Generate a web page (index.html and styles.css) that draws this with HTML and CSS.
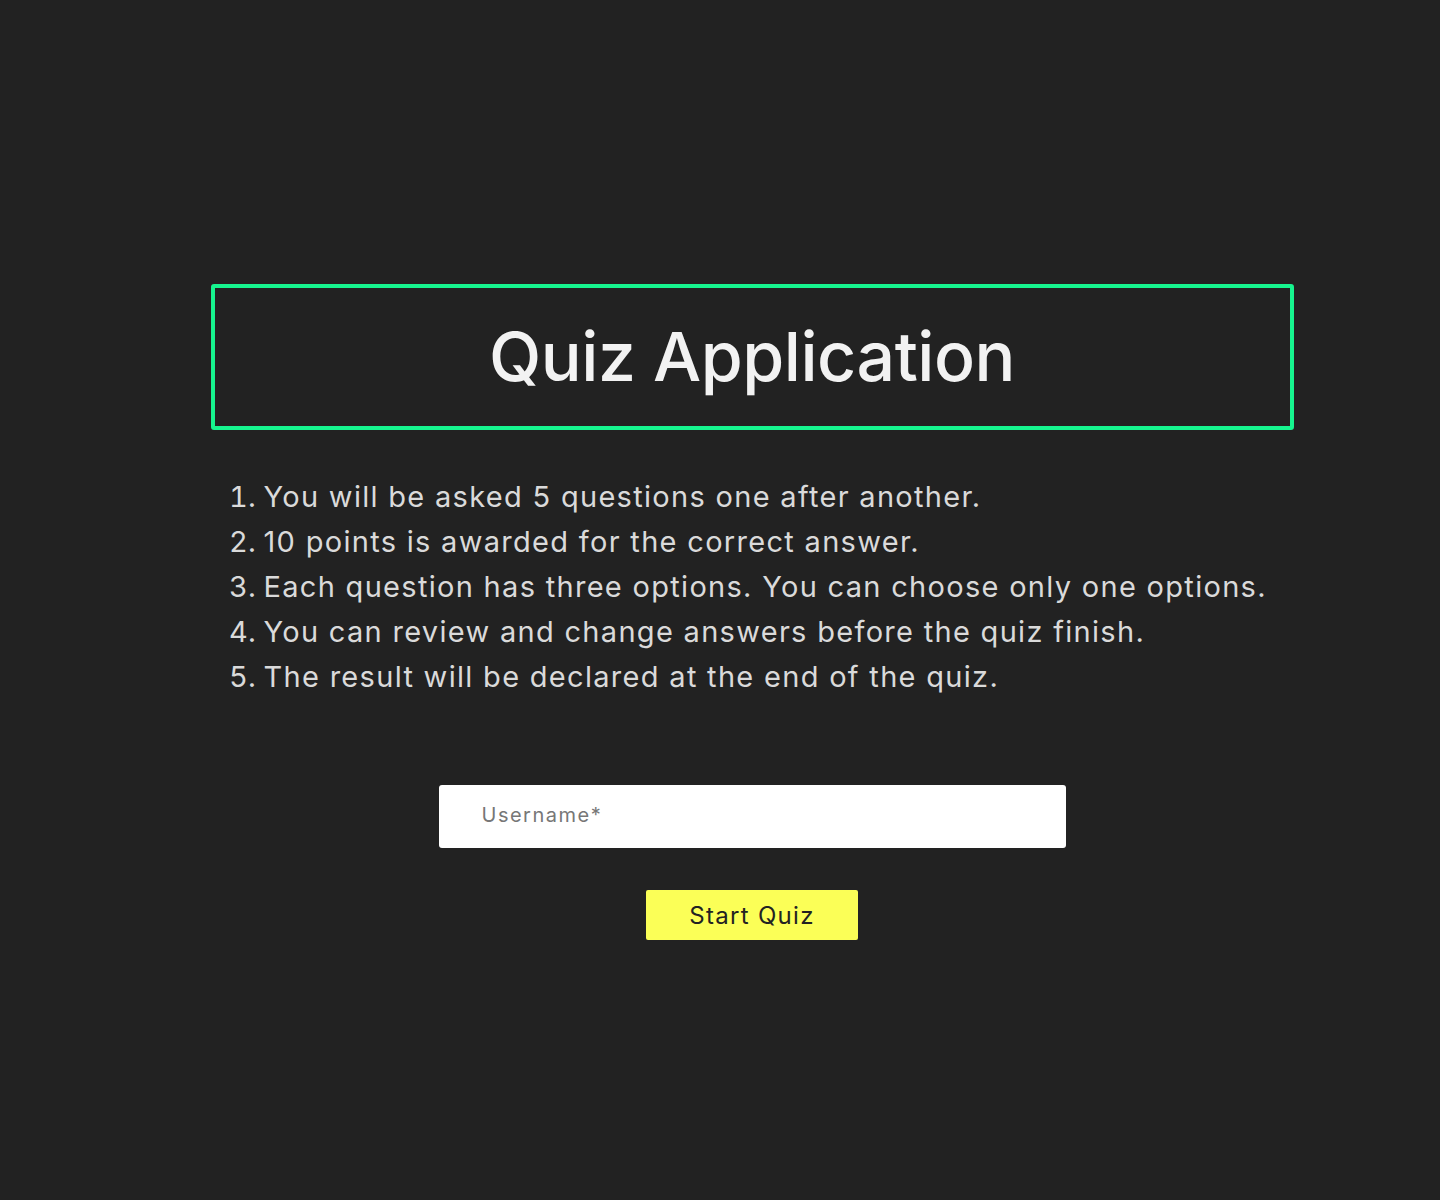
FILE: index.html
```html
<!DOCTYPE html>
<html lang="en">
<head>
<meta charset="utf-8">
<title>Quiz Application</title>
<link rel="stylesheet" href="styles.css">
</head>
<body>
<main class="page">
  <section class="quiz">
    <header class="quiz-header">
      <h1 class="quiz-title">Quiz Application</h1>
    </header>
    <ol class="rules">
      <li>You will be asked 5 questions one after another.</li>
      <li>10 points is awarded for the correct answer.</li>
      <li>Each question has three options. You can choose only one options.</li>
      <li>You can review and change answers before the quiz finish.</li>
      <li>The result will be declared at the end of the quiz.</li>
    </ol>
    <form class="start-form">
      <input class="username" type="text" placeholder="Username*">
      <button class="start-btn" type="button">Start Quiz</button>
    </form>
  </section>
</main>
</body>
</html>
```

FILE: styles.css
```css
html, body {
  margin: 0;
  padding: 0;
  background: #222222;
}
body {
  font-family: Inter, "Noto Sans", "Liberation Sans", sans-serif;
  min-height: 1200px;
}
.page {
  padding: 284px 0 0 64px;
  display: flex;
  justify-content: center;
}
.quiz {
  width: 1083px;
  display: flex;
  flex-direction: column;
}
.quiz-header {
  box-sizing: border-box;
  height: 146px;
  border: 4px solid #16f58f;
  border-radius: 3px;
  display: flex;
  align-items: center;
  justify-content: center;
}
.quiz-title {
  margin: 0;
  color: #f2f2f2;
  font-size: 68px;
  font-weight: 500;
  letter-spacing: -0.5px;
  line-height: 1;
  padding-bottom: 2px;
}
.rules {
  margin: 44px 0 0;
  padding-left: 53px;
  color: #dadada;
  font-size: 29px;
  line-height: 45px;
  letter-spacing: 1.3px;
}
.rules li::marker {
  letter-spacing: 0;
}
.start-form {
  margin-top: 86px;
  display: flex;
  flex-direction: column;
  align-items: center;
  gap: 42px;
}
.username {
  box-sizing: border-box;
  width: 627px;
  height: 63px;
  border: none;
  border-radius: 3px;
  background: #ffffff;
  padding: 0 0 4px 43px;
  font-family: inherit;
  font-size: 20px;
  letter-spacing: 1.5px;
  color: #333;
  outline: none;
}
.username::placeholder {
  color: #777777;
}
.start-btn {
  box-sizing: border-box;
  width: 212px;
  height: 50px;
  border: none;
  border-radius: 2px;
  background: #fbff57;
  color: #222222;
  font-family: inherit;
  font-size: 24px;
  font-weight: 400;
  letter-spacing: 1.3px;
  cursor: pointer;
}
```
